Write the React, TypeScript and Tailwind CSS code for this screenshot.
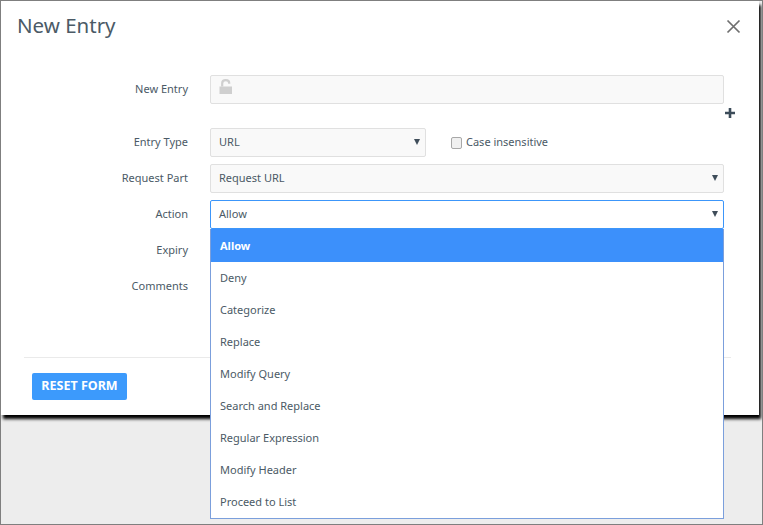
import React from "react";

function Caret() {
  return (
    <svg width="6" height="6" viewBox="0 0 6 6" className="absolute right-[5px] top-[10px]">
      <path d="M0 0h6L3 6z" fill="#3f4d5a" />
    </svg>
  );
}

function Row({ label, children, className }: { label: string; children: React.ReactNode; className?: string }) {
  return (
    <div className={"flex items-start " + (className ?? "")}>
      <label className="w-[187px] shrink-0 pt-[1px] text-right text-[11px] leading-[26px] text-[#4b5a66]">{label}</label>
      <div className="ml-[22px] flex-1">{children}</div>
    </div>
  );
}

function Select({ value, focused, className }: { value: string; focused?: boolean; className?: string }) {
  return (
    <div
      className={
        "relative flex h-[29px] items-center rounded-[2px] border pl-[8px] text-[11px] text-[#4b5a66] " +
        (focused ? "border-[#3c96fa] bg-white " : "border-[#e0e0e0] bg-[#f9f9f9] ") +
        (className ?? "")
      }
    >
      {value}
      <Caret />
    </div>
  );
}

const options = [
  "Allow",
  "Deny",
  "Categorize",
  "Replace",
  "Modify Query",
  "Search and Replace",
  "Regular Expression",
  "Modify Header",
  "Proceed to List",
];

export default function App() {
  return (
    <div className="relative h-[525px] w-[763px] overflow-hidden border border-[#7f7f7f] bg-[#ededed] font-['Noto_Sans','Open_Sans',sans-serif]">
      <div className="h-[414px] w-[758px] bg-white shadow-[2px_4px_3px_#000]">
        <div className="flex h-[74px] items-start justify-between pl-[16px] pr-[18px] pt-[9px]">
          <h1 className="text-[20.5px] leading-[30px] text-[#4b5a66]">New Entry</h1>
          <svg width="15" height="15" viewBox="0 0 15 15" className="mt-[9px]">
            <path d="M1.5 1.5l12 12M13.5 1.5l-12 12" stroke="#6f6f6f" strokeWidth="1.7" fill="none" />
          </svg>
        </div>

        <div className="pr-[35px]">
          <Row label="New Entry">
            <div className="flex h-[29px] items-start rounded-[2px] border border-[#e0e0e0] bg-[#f9f9f9] pl-[8px] pt-[3px]">
              <svg width="14" height="16" viewBox="0 0 14 16">
                <path d="M0.5 7.5h12.5v7.5H0.5z" fill="#cfcfcf" />
                <path d="M3.2 7.5V4.2C3.2 2.2 4.8 1.1 6.8 1.1s3.4 1.1 3.4 3v.6" fill="none" stroke="#cfcfcf" strokeWidth="2.2" />
              </svg>
            </div>
          </Row>
          <div className="relative h-[24px]">
            <svg width="10" height="10" viewBox="0 0 10 10" className="absolute right-[-11px] top-[4px]">
              <path d="M3.7 0h2.6v3.7H10v2.6H6.3V10H3.7V6.3H0V3.7h3.7z" fill="#3c4c59" />
            </svg>
          </div>
          <Row label="Entry Type">
            <div className="flex items-center">
              <Select value="URL" className="w-[216px]" />
              <span className="ml-[25px] h-[12px] w-[11px] rounded-[2px] border border-[#a8a8a8] bg-[#f0f0f0]" />
              <span className="ml-[4px] text-[11px] text-[#4b5a66]">Case insensitive</span>
            </div>
          </Row>
          <Row label="Request Part" className="mt-[7px]">
            <Select value="Request URL" />
          </Row>
          <Row label="Action" className="mt-[7px]">
            <div className="relative">
              <Select value="Allow" focused />
              <ul className="absolute left-0 right-0 top-full z-10 h-[290px] border border-t-0 border-[#7b9fdc] bg-white text-[11px] text-[#4b5a66]">
                {options.map((o, i) => (
                  <li
                    key={o}
                    className={
                      "flex items-center pl-[8px] pt-[1px] " +
                      (i === 0 ? "h-[33px] bg-[#3c90fb] font-bold text-white" : "h-[32px]")
                    }
                  >
                    <span className="ml-[1px]">{o}</span>
                  </li>
                ))}
              </ul>
            </div>
          </Row>
          <Row label="Expiry" className="mt-[7px]">
            <div className="h-[29px] rounded-[2px] border border-[#e0e0e0] bg-[#f9f9f9]" />
          </Row>
          <Row label="Comments" className="mt-[7px]">
            <div className="h-[60px] rounded-[2px] border border-[#e0e0e0] bg-[#f9f9f9]" />
          </Row>
        </div>

        <div className="ml-[23px] mr-[28px] mt-[25px] border-t border-[#eaeaea] pl-[8px] pt-[15px]">
          <button className="block h-[27px] w-[95px] rounded-[2px] bg-[#3c9afc] text-[12.5px] font-bold text-white">
            RESET FORM
          </button>
        </div>
      </div>
    </div>
  );
}
